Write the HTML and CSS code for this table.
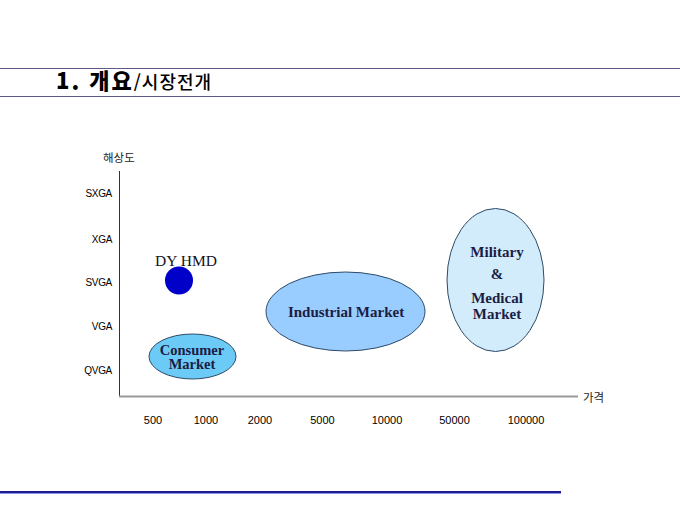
FILE: index.html
```html
<!DOCTYPE html>
<html lang="ko">
<head>
<meta charset="utf-8">
<title>개요/시장전개</title>
<link rel="stylesheet" href="styles.css">
</head>
<body>
<div class="page">
  <header class="header">
    <h1 class="title"><span class="title-main">1. 개요</span><span class="title-sub">/시장전개</span></h1>
  </header>
  <section class="chart">
    <svg class="plot" width="680" height="380" viewBox="0 97 680 380" xmlns="http://www.w3.org/2000/svg">
      <text class="axis-kr" x="103" y="162">해상도</text>
      <line class="y-axis" x1="119.5" y1="171" x2="119.5" y2="397"/>
      <line class="x-axis" x1="119" y1="396.5" x2="578" y2="396.5"/>
      <text class="axis-kr" x="583" y="402">가격</text>

      <text class="ylab" x="112" y="197">SXGA</text>
      <text class="ylab" x="112" y="243">XGA</text>
      <text class="ylab" x="112" y="286">SVGA</text>
      <text class="ylab" x="112" y="330">VGA</text>
      <text class="ylab" x="112" y="374">QVGA</text>

      <text class="xlab" x="153" y="424">500</text>
      <text class="xlab" x="206" y="424">1000</text>
      <text class="xlab" x="260" y="424">2000</text>
      <text class="xlab" x="322.5" y="424">5000</text>
      <text class="xlab" x="387" y="424">10000</text>
      <text class="xlab" x="454.5" y="424">50000</text>
      <text class="xlab" x="526" y="424">100000</text>

      <text class="dy" x="186" y="266">DY HMD</text>
      <circle class="dot" cx="179" cy="280.5" r="14"/>

      <ellipse class="e-consumer" cx="192.5" cy="356.5" rx="43.5" ry="22.5"/>
      <text class="mk mk-tight" x="192" y="354.5">Consumer</text>
      <text class="mk mk-tight" x="192" y="368.5">Market</text>

      <ellipse class="e-industrial" cx="345.5" cy="311.5" rx="79.5" ry="39.5"/>
      <text class="mk" x="346" y="317">Industrial Market</text>

      <ellipse class="e-military" cx="495.5" cy="280" rx="48.5" ry="71.5"/>
      <text class="mk" x="497" y="257">Military</text>
      <text class="mk" x="497" y="279">&amp;</text>
      <text class="mk" x="497" y="303">Medical</text>
      <text class="mk" x="497" y="319">Market</text>
    </svg>
  </section>
  <footer class="footer-rule"></footer>
</div>
</body>
</html>
```

FILE: styles.css
```css
html, body {
  margin: 0;
  padding: 0;
  background: #ffffff;
}

.page {
  width: 680px;
  height: 510px;
  overflow: hidden;
  background: #ffffff;
}

.header {
  margin-top: 68px;
  height: 27px;
  border-top: 1px solid #5c5a86;
  border-bottom: 1px solid #5c5a86;
  padding-left: 56px;
}

.title {
  margin: 0;
  font-family: "Noto Sans CJK KR", sans-serif;
  font-size: 22px;
  line-height: 21px;
  color: #000000;
  white-space: nowrap;
}

.title-main {
  font-weight: 900;
  letter-spacing: 2px;
}

.title-sub {
  font-weight: 500;
  font-size: 18px;
  letter-spacing: 1px;
}

.chart {
  height: 380px;
}

.plot {
  display: block;
}

.y-axis {
  stroke: #333333;
  stroke-width: 1;
}

.x-axis {
  stroke: #9a9a9a;
  stroke-width: 2;
}

.axis-kr {
  font-family: "Noto Sans CJK KR", sans-serif;
  font-size: 11.5px;
  fill: #222222;
}

.ylab {
  font-family: "Liberation Sans", Arial, sans-serif;
  font-size: 10px;
  letter-spacing: -0.3px;
  text-anchor: end;
  fill: #000000;
}

.xlab {
  font-family: "Liberation Sans", Arial, sans-serif;
  font-size: 11px;
  text-anchor: middle;
  fill: #000000;
}

.dy {
  font-family: "Liberation Serif", "Times New Roman", serif;
  font-size: 15.5px;
  text-anchor: middle;
  fill: #111122;
}

.dot {
  fill: #0000c8;
}

.mk {
  font-family: "Liberation Serif", "Times New Roman", serif;
  font-weight: 700;
  font-size: 15px;
  text-anchor: middle;
  fill: #1c1c44;
}

.mk-tight {
  font-size: 14.5px;
}

.e-consumer {
  fill: #6ccaf6;
  stroke: #2e4a66;
  stroke-width: 1;
}

.e-industrial {
  fill: #99ccff;
  stroke: #2e4a66;
  stroke-width: 1;
}

.e-military {
  fill: #d2ecfc;
  stroke: #2e4a66;
  stroke-width: 1;
}

.footer-rule {
  width: 561px;
  height: 2px;
  margin-top: 14px;
  background: #1c1c8c;
  border-bottom: 1px solid #9090f0;
}
```
